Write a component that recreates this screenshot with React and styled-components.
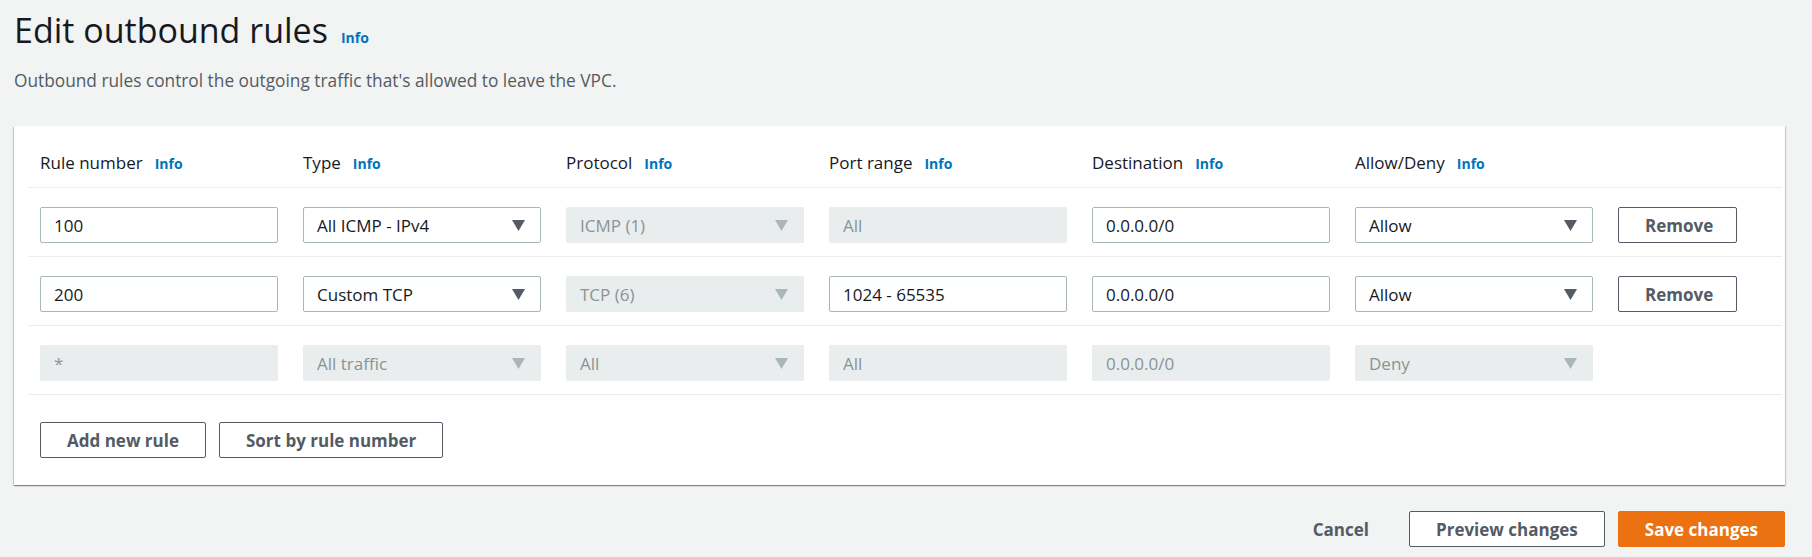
import styled, { createGlobalStyle, css } from "styled-components";

const GlobalStyle = createGlobalStyle`
  body {
    margin: 0;
    background: #f2f3f3;
    font-family: "Open Sans", Roboto, "Liberation Sans", sans-serif;
    color: #16191f;
  }
`;

const Page = styled.main`
  padding: 10px 27px 20px 14px;
`;

const TitleRow = styled.div`
  display: flex;
  align-items: baseline;
  gap: 13px;
`;

const Title = styled.h1`
  margin: 0;
  font-size: 34px;
  line-height: 40px;
  font-weight: 400;
  color: #16191f;
`;

const Info = styled.a`
  color: #0073bb;
  font-size: 14px;
  font-weight: 700;
  text-decoration: none;
  cursor: pointer;
`;

const Description = styled.p`
  margin: 20px 0 0;
  font-size: 17.3px;
  line-height: 22px;
  color: #545b64;
`;

const Panel = styled.section`
  margin-top: 34px;
  background: #fff;
  padding: 0 3px 0 14px;
  box-shadow: 0 1px 1px 0 rgba(0, 28, 36, 0.3), 1px 1px 1px 0 rgba(0, 28, 36, 0.15),
    -1px 1px 1px 0 rgba(0, 28, 36, 0.15);
`;

const columns = css`
  display: grid;
  grid-template-columns: repeat(6, 238px) 119px;
  column-gap: 25px;
  align-items: center;
  padding-left: 12px;
  border-bottom: 1px solid #eaeded;
`;

const HeaderRow = styled.div`
  ${columns};
  padding-top: 26px;
  padding-bottom: 12px;
`;

const HeaderCell = styled.div`
  display: flex;
  align-items: baseline;
  gap: 12px;
  font-size: 17px;
  line-height: 22px;
`;

const RuleRow = styled.div`
  ${columns};
  padding-top: 19px;
  padding-bottom: 13px;
`;

const fieldBase = css`
  box-sizing: border-box;
  width: 100%;
  height: 36px;
  border-radius: 2px;
  font-family: inherit;
  font-size: 17px;
  padding: 0 13px;
  border: 1px solid ${(p) => (p.$disabled ? "#eaeded" : "#aab7b8")};
  background: ${(p) => (p.$disabled ? "#eaeded" : "#fff")};
  color: ${(p) => (p.$disabled ? "#879596" : "#16191f")};
`;

const TextField = styled.input`
  ${fieldBase};
  outline: none;
`;

const SelectBox = styled.div`
  ${fieldBase};
  display: flex;
  align-items: center;
  justify-content: space-between;
  padding-right: 15px;
  cursor: ${(p) => (p.$disabled ? "default" : "pointer")};
`;

const Caret = styled.svg`
  width: 13px;
  height: 11px;
  fill: ${(p) => (p.$disabled ? "#aab7b8" : "#545b64")};
`;

const Button = styled.button`
  box-sizing: border-box;
  height: 36px;
  padding: 0 26px;
  border-radius: 2px;
  border: 1px solid ${(p) => (p.$primary ? "#ec7211" : p.$link ? "transparent" : "#545b64")};
  background: ${(p) => (p.$primary ? "#ec7211" : p.$link ? "transparent" : "#fff")};
  color: ${(p) => (p.$primary ? "#fff" : "#545b64")};
  font-family: inherit;
  font-size: 17px;
  font-weight: 700;
  cursor: pointer;
  white-space: nowrap;
`;

const Actions = styled.div`
  display: flex;
  gap: 13px;
  padding: 27px 0 27px 12px;
`;

const Footer = styled.footer`
  display: flex;
  justify-content: flex-end;
  gap: 13px;
  margin-top: 26px;
`;

function Select({ value, disabled }) {
  return (
    <SelectBox $disabled={disabled}>
      <span>{value}</span>
      <Caret $disabled={disabled} viewBox="0 0 13 11">
        <polygon points="0,0 13,0 6.5,11" />
      </Caret>
    </SelectBox>
  );
}

const headers = ["Rule number", "Type", "Protocol", "Port range", "Destination", "Allow/Deny"];

const rules = [
  { number: "100", type: "All ICMP - IPv4", protocol: "ICMP (1)", port: "All", portLocked: true, dest: "0.0.0.0/0", action: "Allow", removable: true },
  { number: "200", type: "Custom TCP", protocol: "TCP (6)", port: "1024 - 65535", portLocked: false, dest: "0.0.0.0/0", action: "Allow", removable: true },
  { number: "*", type: "All traffic", protocol: "All", port: "All", portLocked: true, dest: "0.0.0.0/0", action: "Deny", locked: true },
];

export default function App() {
  return (
    <>
      <GlobalStyle />
      <Page>
        <TitleRow>
          <Title>Edit outbound rules</Title>
          <Info>Info</Info>
        </TitleRow>
        <Description>
          Outbound rules control the outgoing traffic that's allowed to leave the VPC.
        </Description>

        <Panel>
          <HeaderRow>
            {headers.map((h) => (
              <HeaderCell key={h}>
                {h}
                <Info>Info</Info>
              </HeaderCell>
            ))}
          </HeaderRow>

          {rules.map((r) => (
            <RuleRow key={r.number}>
              <TextField readOnly defaultValue={r.number} $disabled={r.locked} />
              <Select value={r.type} disabled={r.locked} />
              <Select value={r.protocol} disabled />
              <TextField readOnly defaultValue={r.port} $disabled={r.portLocked} />
              <TextField readOnly defaultValue={r.dest} $disabled={r.locked} />
              <Select value={r.action} disabled={r.locked} />
              {r.removable ? <Button>Remove</Button> : <span />}
            </RuleRow>
          ))}

          <Actions>
            <Button>Add new rule</Button>
            <Button>Sort by rule number</Button>
          </Actions>
        </Panel>

        <Footer>
          <Button $link>Cancel</Button>
          <Button>Preview changes</Button>
          <Button $primary>Save changes</Button>
        </Footer>
      </Page>
    </>
  );
}
